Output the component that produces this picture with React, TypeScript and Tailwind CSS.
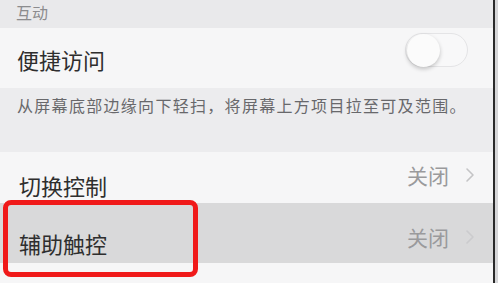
import React from "react";

const font = { fontFamily: '"Noto Sans CJK SC", "Noto Sans", sans-serif' };

function Chevron({ className }: { className?: string }) {
  return (
    <svg className={className} width="10" height="16" viewBox="0 0 10 16" fill="none">
      <path d="M2 2 L8 8 L2 14" stroke="currentColor" strokeWidth="1.6" strokeLinecap="round" strokeLinejoin="round" />
    </svg>
  );
}

export default function App() {
  return (
    <div className="relative flex h-[283px] w-[498px] overflow-hidden bg-[#f5f5f6]" style={font}>
      <div className="flex flex-1 flex-col">
        <div className="h-[28px] bg-[#e9e9eb] pl-[16px] pt-[1px] text-[16px] leading-[22px] text-[#8c8c8e]">互动</div>
        <div className="flex h-[60px] items-start justify-between bg-[#f6f6f7] pl-[17px] pr-[25px]">
          <span className="mt-[16px] text-[22px] leading-[30px] text-[#2e2e2e]">便捷访问</span>
          <div className="mt-[5px] flex h-[34px] w-[63px] items-center rounded-full border border-[#e4e4e6] bg-[#f8f8f9] px-[1px]">
            <div className="h-[33px] w-[33px] rounded-full bg-[#fbfbfb] shadow-[0_2px_4px_rgba(0,0,0,0.22)]" />
          </div>
        </div>
        <div className="h-[64px] bg-[#ececee] pl-[17px] pt-[6px] text-[16px] leading-[22px] tracking-[1.3px] text-[#68686b]">
          从屏幕底部边缘向下轻扫，将屏幕上方项目拉至可及范围。
        </div>
        <div className="flex h-[51px] items-start justify-between bg-[#f6f6f7] pl-[19px] pr-[18px]">
          <span className="mt-[18px] text-[22px] leading-[30px] text-[#2e2e2e]">切换控制</span>
          <div className="mt-[10px] flex items-center gap-[16px] text-[#9a9a9c]">
            <span className="text-[21px] leading-[26px]">关闭</span>
            <Chevron className="text-[#c4c4c6]" />
          </div>
        </div>
        <div className="flex h-[60px] items-start justify-between bg-[#d9d9da] pl-[19px] pr-[18px]">
          <span className="mt-[25px] text-[22px] leading-[30px] text-[#2e2e2e]">辅助触控</span>
          <div className="mt-[21px] flex items-center gap-[16px] text-[#9a9a9c]">
            <span className="text-[21px] leading-[26px]">关闭</span>
            <Chevron className="text-[#cbcbcd]" />
          </div>
        </div>
        <div className="flex-1 bg-[#f6f6f7]" />
      </div>
      <div className="w-[2px] bg-[#2a2a2a]" />
      <div className="w-[3px] bg-[#d6d6d8]" />
      <div className="pointer-events-none absolute left-[3px] top-[200px] h-[77px] w-[195px] rounded-[8px] border-[5px] border-[#f01a1a]" />
    </div>
  );
}
